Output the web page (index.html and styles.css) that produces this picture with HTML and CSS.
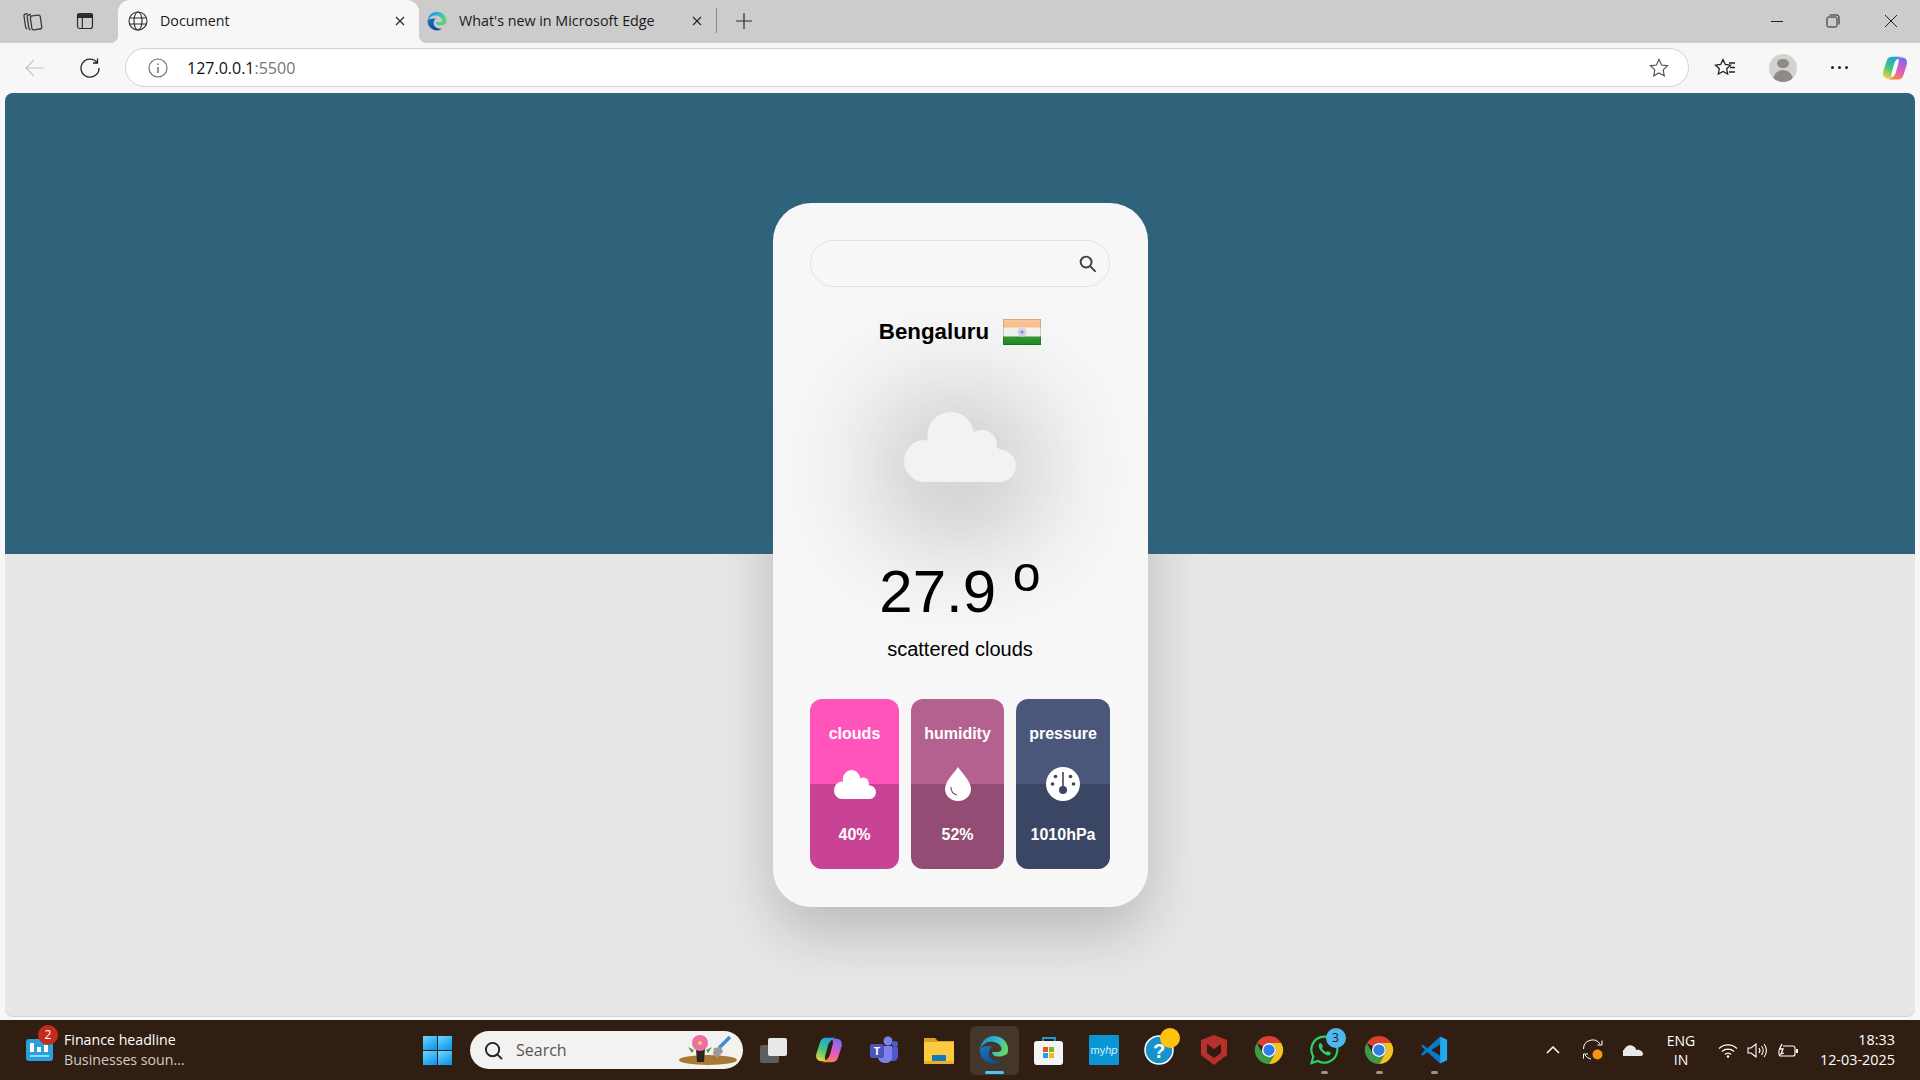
FILE: index.html
```html
<!DOCTYPE html>
<html lang="en">
<head>
    <meta charset="UTF-8">
    <meta name="viewport" content="width=device-width, initial-scale=1.0">
    <title>Document</title>
    <link rel="stylesheet" href="styles.css">
</head>
<body>
<svg class="defs" width="0" height="0">
    <defs>
        <linearGradient id="edgeTop" x1="0" y1="0" x2="1" y2="0.4">
            <stop offset="0" stop-color="#1b7fd0"/>
            <stop offset="0.55" stop-color="#2fb5dc"/>
            <stop offset="1" stop-color="#5fd66c"/>
        </linearGradient>
        <linearGradient id="edgeLow" x1="0" y1="0" x2="0.6" y2="1">
            <stop offset="0" stop-color="#1a78c8"/>
            <stop offset="1" stop-color="#0f4c8f"/>
        </linearGradient>
        <linearGradient id="copLeft" x1="0.7" y1="0" x2="0.2" y2="1">
            <stop offset="0" stop-color="#1f9fe8"/>
            <stop offset="0.55" stop-color="#3fc77e"/>
            <stop offset="1" stop-color="#f2d23c"/>
        </linearGradient>
        <linearGradient id="copRight" x1="0.7" y1="0" x2="0.3" y2="1">
            <stop offset="0" stop-color="#7b6cf0"/>
            <stop offset="0.55" stop-color="#e25bc0"/>
            <stop offset="1" stop-color="#f98a3c"/>
        </linearGradient>
        <linearGradient id="winTile" x1="0" y1="0" x2="0.6" y2="1">
            <stop offset="0" stop-color="#6fd8f8"/>
            <stop offset="1" stop-color="#129bf2"/>
        </linearGradient>
        <linearGradient id="flagSheen" x1="0" y1="0" x2="0" y2="1">
            <stop offset="0" stop-color="#fff" stop-opacity="0.35"/>
            <stop offset="1" stop-color="#fff" stop-opacity="0"/>
        </linearGradient>
        <symbol id="cloud" viewBox="0 0 112 70" preserveAspectRatio="none">
            <circle cx="46.7" cy="23.3" r="23.3"/>
            <circle cx="78" cy="33" r="15"/>
            <circle cx="21" cy="49" r="21"/>
            <circle cx="95.5" cy="53.7" r="16.3"/>
            <rect x="21" y="36" width="74" height="34"/>
        </symbol>
        <symbol id="edge" viewBox="0 0 32 32">
            <path fill="url(#edgeTop)" d="M16 1C8 1 2 7 1 15c3-5 7-8 12-8 6 0 11 4 11 8 0 2-2 3-4 3h-6c0 3 3 5 7 5 3 0 7-1 9-3 1-2 1-3 1-5C31 7 24 1 16 1z"/>
            <path fill="url(#edgeLow)" d="M1 15c-1 9 7 16 15 16 3 0 6-1 8-3-5 1-11-1-13-6-1-4 0-7 3-10-6 0-11 0-13 3z"/>
        </symbol>
        <symbol id="chrome" viewBox="0 0 32 32">
            <path fill="#d9402f" d="M3 8.5A15 15 0 0 1 29 8.5H16A7.5 7.5 0 0 0 9.5 12.25Z"/>
            <path fill="#f3c221" d="M29 8.5A15 15 0 0 1 16 31L22.5 19.75A7.5 7.5 0 0 0 16 8.5Z"/>
            <path fill="#3c9b47" d="M16 31A15 15 0 0 1 3 8.5L9.5 19.75A7.5 7.5 0 0 0 22.5 19.75Z"/>
            <circle cx="16" cy="16" r="7.5" fill="#fff"/>
            <circle cx="16" cy="16" r="6" fill="#2f7ee6"/>
        </symbol>
        <symbol id="copilot" viewBox="0 0 32 32">
            <path fill="url(#copLeft)" d="M13 3C9 3 7 5 6 9L2.5 20C1.500 25 4 28 8 28h6c-2-1-3-3-2-6l3-11c1-3 4-7 9-8z"/>
            <path fill="url(#copRight)" d="M19 29c4 0 6-2 7-6l3.500-11C30.500 7 28 4 24 4h-6c2 1 3 3 2 6l-3 11c-1 3-4 7-9 8z"/>
        </symbol>
    </defs>
</svg>

<div class="tabstrip">
    <svg class="strip-icon workspaces" viewBox="0 0 24 24" fill="none" stroke="#3a3a3a" stroke-width="1.3"><rect x="11" y="6.5" width="10" height="14" rx="2" transform="rotate(-8 16 13)"/><path d="M11 5.500 8.600 6C7.600 6.200 7 7 7.200 8l1.600 11c.2 1 .7 1.600 1.700 2"/><path d="M7.500 4.500 5.500 5C4.500 5.200 3.800 6 4 7l1.600 11c.2 1 .7 1.600 1.400 2"/></svg>
    <svg class="strip-icon tabs-icon" viewBox="0 0 20 20" fill="none" stroke="#2b2b2b" stroke-width="1.3"><rect x="1.7" y="1.7" width="16.6" height="16.6" rx="2.5"/><path d="M2 2.5h16v3.500H2z" fill="#2b2b2b"/><path d="M7 6v12"/></svg>
    <div class="tab active">
        <svg class="tab-icon" viewBox="0 0 20 20" fill="none" stroke="#2b2b2b" stroke-width="1.1"><circle cx="10" cy="10" r="9"/><ellipse cx="10" cy="10" rx="4" ry="9"/><path d="M1.500 7h17M1.500 13h17"/></svg>
        <span class="tab-title">Document</span>
        <svg class="tab-close" viewBox="0 0 10 10" stroke="#222" stroke-width="1.1"><path d="M1 1l8 8M9 1l-8 8"/></svg>
    </div>
    <div class="tab">
        <svg class="tab-icon"><use href="#edge"/></svg>
        <span class="tab-title">What's new in Microsoft Edge</span>
        <svg class="tab-close" viewBox="0 0 10 10" stroke="#222" stroke-width="1.1"><path d="M1 1l8 8M9 1l-8 8"/></svg>
    </div>
    <span class="tab-sep"></span>
    <svg class="new-tab" viewBox="0 0 18 18" stroke="#2b2b2b" stroke-width="1.2"><path d="M9 1v16M1 9h16"/></svg>
    <div class="window-buttons">
        <svg viewBox="0 0 14 14" stroke="#222" stroke-width="1"><path d="M1 7.500h12"/></svg>
        <svg viewBox="0 0 14 14" fill="none" stroke="#222" stroke-width="1"><rect x="1" y="3" width="10" height="10" rx="1.5"/><path d="M3.500 1h7.500A2 2 0 0 1 13 3v7.500"/></svg>
        <svg viewBox="0 0 14 14" stroke="#222" stroke-width="1"><path d="M1 1l12 12M13 1 1 13"/></svg>
    </div>
</div>

<div class="toolbar">
    <svg class="back" viewBox="0 0 20 20" fill="none" stroke="#c4c4c4" stroke-width="1.2"><path d="M1 10h18M9 2l-8 8 8 8"/></svg>
    <svg class="reload" viewBox="0 0 20 20" fill="none" stroke="#222" stroke-width="1.3"><path d="M17 4.500A9 9 0 1 0 19 10"/><path d="M17.500 0.500V5h-4.500"/></svg>
    <div class="address">
        <svg class="info" viewBox="0 0 20 20" fill="none" stroke="#666" stroke-width="1.1"><circle cx="10" cy="10" r="9"/><path d="M10 9v6M10 5.500v1.500" stroke-width="1.4"/></svg>
        <span class="url">127.0.0.1<span class="url-port">:5500</span></span>
        <svg class="star" viewBox="0 0 20 20" fill="none" stroke="#555" stroke-width="1.2"><path d="M10 1.500l2.600 5.500 6 .8-4.400 4.100 1.100 6L10 15l-5.300 2.900 1.100-6L1.400 7.800l6-.8z"/></svg>
    </div>
    <svg class="tool-fav" viewBox="0 0 22 20" fill="none" stroke="#222" stroke-width="1.3"><path d="M9 1.500l2.300 5 5.200.7-3.800 3.600 1 5.200L9 13.500 4.300 16l1-5.200L1.500 7.200l5.200-.7z"/><path d="M15 5h6M16 9.500h5M15 14h6"/></svg>
    <div class="avatar">
        <span class="avatar-head"></span>
        <span class="avatar-body"></span>
    </div>
    <div class="dots"><span></span><span></span><span></span></div>
    <svg class="tool-copilot"><use href="#copilot"/></svg>
</div>

<main class="page">
    <div class="sky"></div>
    <div class="card-shadow"></div>
    <section class="card">
        <div class="search">
            <svg class="search-icon" viewBox="0 0 18 18" fill="none" stroke="#3c3c3c" stroke-width="2"><circle cx="7.500" cy="7.500" r="5.800"/><path d="M12 12l5 5" stroke-linecap="round"/></svg>
        </div>
        <div class="city">
            <span>Bengaluru</span>
            <svg class="flag" viewBox="0 0 38 26">
                <rect width="38" height="26" fill="#f0f0ee"/>
                <rect width="38" height="8.5" fill="#f9ab66"/>
                <rect y="17.5" width="38" height="8.5" fill="#1f8a1e"/>
                <circle cx="19" cy="13" r="4.5" fill="#c8c8e6"/>
                <circle cx="19" cy="13" r="1.5" fill="#6a6ac0"/>
                <rect width="38" height="26" fill="url(#flagSheen)"/>
                <rect x="0.5" y="0.5" width="37" height="25" fill="none" stroke="#000" stroke-opacity="0.15"/>
            </svg>
        </div>
        <svg class="weather-icon"><use href="#cloud"/></svg>
        <div class="temp">27.9 <sup>o</sup></div>
        <div class="desc">scattered clouds</div>
        <div class="stats">
            <div class="stat stat-clouds">
                <span>clouds</span>
                <svg class="stat-cloud"><use href="#cloud"/></svg>
                <span>40%</span>
            </div>
            <div class="stat stat-humidity">
                <span>humidity</span>
                <svg class="stat-drop" viewBox="0 0 26 34"><path fill="#fff" d="M13 0C16 5 26 14 26 22A13 12 0 0 1 0 22C0 14 10 5 13 0z"/><path fill="none" stroke="#934d75" stroke-width="1.2" d="M6 20c0 4 2 7 6 8"/></svg>
                <span>52%</span>
            </div>
            <div class="stat stat-pressure">
                <span>pressure</span>
                <svg class="stat-gauge" viewBox="0 0 34 34"><circle cx="17" cy="17" r="17" fill="#fff"/><g fill="#3b4664"><circle cx="17" cy="23" r="4"/><rect x="16.2" y="5" width="1.6" height="18"/><circle cx="9.500" cy="9.500" r="1.8"/><circle cx="24.500" cy="9.500" r="1.8"/><circle cx="6.500" cy="17" r="1.8"/><circle cx="27.500" cy="17" r="1.8"/></g></svg>
                <span>1010hPa</span>
            </div>
        </div>
    </section>
</main>

<footer class="taskbar">
    <div class="news">
        <div class="news-icon">
            <svg viewBox="0 0 27 22"><rect width="27" height="22" rx="3" fill="#2a9fdc"/><rect x="4" y="4" width="4" height="9" fill="#fff"/><rect x="11" y="8" width="4" height="5" fill="#fff"/><rect x="18" y="6" width="4" height="7" fill="#fff"/><rect x="4" y="16" width="19" height="2" fill="#7fe0ff"/></svg>
            <span class="news-badge">2</span>
        </div>
        <div class="news-text">
            <span class="news-title">Finance headline</span>
            <span class="news-sub">Businesses soun...</span>
        </div>
    </div>
    <div class="start">
        <svg viewBox="0 0 29 29"><rect width="14" height="14" fill="url(#winTile)"/><rect x="15" width="14" height="14" fill="url(#winTile)"/><rect y="15" width="14" height="14" fill="url(#winTile)"/><rect x="15" y="15" width="14" height="14" fill="url(#winTile)"/></svg>
    </div>
    <div class="task-search">
        <svg class="task-search-icon" viewBox="0 0 20 20" fill="none" stroke="#222" stroke-width="2"><circle cx="9" cy="9" r="7"/><path d="M14 14l5 5"/></svg>
        <span>Search</span>
        <svg class="task-search-art" viewBox="0 0 60 30">
            <ellipse cx="30" cy="25" rx="29" ry="5" fill="#a67a35"/>
            <path d="M18 14h9l-1 13h-7z" fill="#2a2320"/>
            <circle cx="22" cy="8" r="8" fill="#ea6fa5"/>
            <circle cx="22" cy="8" r="2" fill="#f5d24a"/>
            <path d="M10 12l6 3-2 3zM34 12l-6 3 2 3z" fill="#4f9a3d"/>
            <path d="M52 2 41 13" stroke="#3a8fd8" stroke-width="3.5"/>
            <path d="M36 13l7-1 2 5-6 6-4-4z" fill="#9a9a9a"/>
        </svg>
    </div>
    <div class="apps">
        <div class="app">
            <svg viewBox="0 0 30 30"><rect x="1" y="10" width="19" height="18" rx="2" fill="#5d5d5d"/><rect x="9" y="3" width="19" height="18" rx="2" fill="#e8e8e8"/></svg>
        </div>
        <div class="app"><svg><use href="#copilot"/></svg></div>
        <div class="app">
            <svg viewBox="0 0 30 30"><circle cx="19" cy="6" r="4.5" fill="#7b83eb"/><circle cx="26" cy="9" r="3" fill="#5059c9"/><path d="M21 12h8v9c0 3-2 5-5 5h-3z" fill="#5059c9"/><path d="M9 11h14v11c0 4-3 6-7 6s-7-3-7-6z" fill="#7b83eb"/><rect x="1" y="9" width="14" height="14" rx="2" fill="#4b53bc"/><text class="teams-t" x="8" y="20" text-anchor="middle">T</text></svg>
        </div>
        <div class="app">
            <svg viewBox="0 0 30 30"><path d="M0 3h11l3 3h16v8H0z" fill="#d9a11f"/><rect y="7" width="30" height="22" rx="1" fill="#fcc940"/><rect x="8" y="20" width="14" height="6" rx="1" fill="#1079c4"/><rect y="26" width="30" height="3" fill="#e9b226"/></svg>
        </div>
        <div class="app app-active">
            <svg><use href="#edge"/></svg>
            <span class="app-bar"></span>
        </div>
        <div class="app">
            <svg viewBox="0 0 30 30"><path d="M9 7V3h12v4" fill="none" stroke="#1f9ddb" stroke-width="1.8"/><rect y="6" width="29" height="24" rx="3" fill="#f4f4f4"/><rect x="9" y="12" width="5" height="5" fill="#e8522a"/><rect x="15" y="12" width="5" height="5" fill="#7db82a"/><rect x="9" y="18" width="5" height="5" fill="#1ba0e2"/><rect x="15" y="18" width="5" height="5" fill="#f6b80f"/></svg>
        </div>
        <div class="app">
            <div class="myhp">my<i>hp</i></div>
        </div>
        <div class="app">
            <svg class="help" viewBox="0 0 30 30"><circle cx="15" cy="15" r="14" fill="#1793c9" stroke="#fff" stroke-width="1.5"/><text class="help-q" x="15" y="23" text-anchor="middle">?</text><circle cx="26" cy="3" r="10" fill="#ffc20e"/></svg>
        </div>
        <div class="app">
            <svg viewBox="0 0 30 30"><path d="M2 5l13-5 13 5v15L15 30 2 20z" fill="#b7302b"/><path d="M8 9l7 5 7-5v9l-7 5-7-5z" fill="#2f1c12"/></svg>
        </div>
        <div class="app"><svg><use href="#chrome"/></svg></div>
        <div class="app">
            <svg viewBox="0 0 30 30"><path d="M2.500 28l1.800-6.500A13 13 0 1 1 9 26z" fill="none" stroke="#25d366" stroke-width="2.2"/><path d="M10 9c-1 2 0 5 3 8s6 4 8 3l1-2-3-2-2 1c-1 0-4-3-4-4l1-2-2-3z" fill="#25d366"/></svg>
            <span class="app-count">3</span>
            <span class="app-dot"></span>
        </div>
        <div class="app">
            <svg><use href="#chrome"/></svg>
            <span class="app-dot"></span>
        </div>
        <div class="app">
            <svg viewBox="0 0 32 32"><path fill="#0a7acb" d="M22.500 1.500 9 14 4 10l-2 1.500L6.500 16 2 20.500 4 22l5-4 13.500 12.500V22L13 16l9.500-6z"/><path fill="#23a9f2" d="M22.500 1.500 30 5v22l-7.500 3.500z"/></svg>
            <span class="app-dot"></span>
        </div>
    </div>
    <div class="tray">
        <div class="tray-item tray-w40">
            <svg class="tray-chevron" viewBox="0 0 14 8" fill="none" stroke="#fff" stroke-width="1.5"><path d="M1 7l6-6 6 6"/></svg>
        </div>
        <div class="tray-item tray-w40">
            <svg class="tray-sync" viewBox="0 0 22 22" fill="none" stroke="#fff" stroke-width="1"><path d="M1.500 10A9 9 0 0 1 18 5M20 1.500V6h-4.500M6 15H1.500v4.500M3 16a9 9 0 0 0 6 4"/><circle cx="15.500" cy="15.500" r="5" fill="#f7930e" stroke="none"/></svg>
        </div>
        <div class="tray-item tray-w40">
            <svg class="tray-onedrive" viewBox="0 0 20 12"><path d="M1 12a3 3 0 0 1 0-6c1-3 5-6 9-4 2 1 3 2 3 4 3-1 7 1 7 4 0 1-1 2-2 2z" fill="#e8e8e8"/></svg>
        </div>
        <div class="tray-lang"><span>ENG</span><span>IN</span></div>
        <svg class="tray-wifi" viewBox="0 0 20 15" fill="none" stroke="#fff" stroke-width="1.2"><path d="M1 5.500a13 13 0 0 1 18 0M4 8.500a9 9 0 0 1 12 0M7 11.500a4 4 0 0 1 6 0"/><circle cx="10" cy="13.500" r="1.2" fill="#fff" stroke="none"/></svg>
        <svg class="tray-speaker" viewBox="0 0 20 15" fill="none" stroke="#fff" stroke-width="1.1"><path d="M1 5h3l5-4v13l-5-4H1z"/><path d="M12 5a4 4 0 0 1 0 5M14.500 3a7 7 0 0 1 0 9M17 1a10 10 0 0 1 0 13"/></svg>
        <svg class="tray-battery" viewBox="0 0 20 15" fill="none" stroke="#fff" stroke-width="1.1"><path d="M5 3h10a2 2 0 0 1 2 2v6a2 2 0 0 1-2 2H3a2 2 0 0 1-2-2V7"/><path d="M18 6.500h1.500v3H18" fill="#fff"/><path d="M4 1 1.500 6H5l-2 5 3-1" stroke-width="1.3"/></svg>
        <div class="clock"><span>18:33</span><span>12-03-2025</span></div>
    </div>
</footer>
</body>
</html>
```

FILE: styles.css
```css
* {
    box-sizing: border-box;
}
html, body {
    height: 100%;
}
body {
    display: flex;
    flex-direction: column;
    height: 1080px;
    margin: 0;
    overflow: hidden;
    background: #f7f7f7;
    font-family: "Open Sans", "Noto Sans", sans-serif;
    color: #1a1a1a;
}
svg {
    display: block;
    flex: none;
}
.defs {
    position: absolute;
}

/* browser tabs */
.tabstrip {
    display: flex;
    align-items: center;
    flex: none;
    height: 43px;
    background: #cccccc;
}
.strip-icon {
    width: 20px;
    height: 20px;
    margin-bottom: 2px;
}
.workspaces {
    width: 24px;
    height: 24px;
    margin-left: 20px;
}
.tabs-icon {
    width: 18px;
    height: 18px;
    margin-left: 32px;
}
.tab {
    position: relative;
    display: flex;
    align-items: center;
    height: 43px;
    width: 297px;
    padding-left: 8px;
    padding-bottom: 2px;
    font-size: 14.3px;
}
.tab.active {
    width: 301px;
    margin-left: 24px;
    padding-left: 10px;
    border-radius: 12px 12px 0 0;
    background: #f7f7f7;
}
.tab.active::before,
.tab.active::after {
    content: "";
    position: absolute;
    bottom: 0;
    width: 8px;
    height: 8px;
}
.tab.active::before {
    left: -8px;
    background: radial-gradient(circle at 0 0, transparent 8px, #f7f7f7 8.5px);
}
.tab.active::after {
    right: -8px;
    background: radial-gradient(circle at 100% 0, transparent 8px, #f7f7f7 8.5px);
}
.tab-icon {
    width: 20px;
    height: 20px;
}
.tab-title {
    margin-left: 12px;
}
.tab-close {
    width: 10px;
    height: 10px;
    margin-left: auto;
    margin-right: 14px;
}
.tab-sep {
    width: 1px;
    height: 25px;
    margin-bottom: 2px;
    background: #8a8a8a;
}
.new-tab {
    width: 18px;
    height: 18px;
    margin-left: 18px;
    margin-bottom: 2px;
}
.window-buttons {
    display: flex;
    gap: 44px;
    margin-left: auto;
    margin-right: 22px;
    margin-bottom: 2px;
}
.window-buttons svg {
    width: 14px;
    height: 14px;
}
.window-buttons svg:first-child {
    margin-right: -2px;
}

/* address bar row */
.toolbar {
    display: flex;
    align-items: center;
    flex: none;
    height: 50px;
    padding-bottom: 1px;
    background: #f7f7f7;
}
.back {
    width: 20px;
    height: 20px;
    margin-left: 25px;
}
.reload {
    width: 20px;
    height: 20px;
    margin-left: 35px;
}
.address {
    display: flex;
    align-items: center;
    width: 1564px;
    height: 39px;
    margin-left: 25px;
    padding-left: 22px;
    border: 1px solid #d2d2d2;
    border-radius: 20px;
    background: #fff;
}
.info {
    width: 20px;
    height: 20px;
}
.url {
    margin-left: 19px;
    font-size: 16px;
    color: #111;
}
.url-port {
    color: #767676;
}
.star {
    width: 20px;
    height: 20px;
    margin-left: auto;
    margin-right: 19px;
}
.tool-fav {
    width: 22px;
    height: 20px;
    margin-left: 25px;
}
.avatar {
    display: flex;
    flex-direction: column;
    align-items: center;
    width: 28px;
    height: 28px;
    margin-left: 33px;
    border-radius: 50%;
    overflow: hidden;
    background: #d3d2ce;
}
.avatar-head {
    width: 12px;
    height: 12px;
    margin-top: 5px;
    border-radius: 50%;
    background: #8d8a87;
}
.avatar-body {
    width: 20px;
    height: 14px;
    margin-top: 2px;
    border-radius: 10px 10px 0 0;
    background: #8d8a87;
}
.dots {
    display: flex;
    gap: 4px;
    margin-left: 34px;
}
.dots span {
    width: 3px;
    height: 3px;
    border-radius: 50%;
    background: #222;
}
.tool-copilot {
    width: 28px;
    height: 28px;
    margin-left: 33px;
}

/* the weather page */
.page {
    display: grid;
    flex: none;
    width: 1910px;
    height: 923px;
    margin-left: 5px;
    border-radius: 8px;
    overflow: hidden;
    background: #e7e7e7;
    box-shadow: 0 1px 0 #d4d4d4;
    font-family: "Liberation Sans", Arial, sans-serif;
}
.sky {
    grid-area: 1 / 1;
    z-index: 1;
    height: 461px;
    background: #2e637b;
}
.card-shadow {
    grid-area: 1 / 1;
    place-self: center;
    width: 375px;
    height: 704px;
    border-radius: 38px;
    box-shadow: 0 25px 60px rgba(0, 0, 0, 0.2);
}
.card {
    grid-area: 1 / 1;
    place-self: center;
    z-index: 2;
    display: flex;
    flex-direction: column;
    align-items: center;
    width: 375px;
    height: 704px;
    padding: 37px 37.5px 0;
    border-radius: 38px;
    background: #f7f7f7;
    color: #000;
}
.search {
    display: flex;
    align-items: center;
    justify-content: flex-end;
    width: 300px;
    height: 47px;
    padding-right: 13px;
    border: 1px solid #e0e0e0;
    border-radius: 24px;
}
.search-icon {
    width: 17px;
    height: 17px;
}
.city {
    display: flex;
    align-items: center;
    gap: 14px;
    height: 26px;
    margin-top: 32px;
    font-size: 22.3px;
    font-weight: bold;
}
.flag {
    width: 38px;
    height: 26px;
}
.weather-icon {
    width: 112px;
    height: 70px;
    margin-top: 67px;
    fill: #f2f2f2;
    filter: drop-shadow(0 14px 65px rgba(0, 0, 0, 0.75));
}
.temp {
    margin-top: 80px;
    font-size: 60px;
    line-height: 60px;
}
.temp sup {
    line-height: 0;
}
.desc {
    margin-top: 16px;
    font-size: 20px;
    line-height: 23px;
}
.stats {
    display: grid;
    grid-template-columns: 89px 93px 94px;
    gap: 12px;
    width: 300px;
    height: 170px;
    margin-top: 38px;
}
.stat {
    display: flex;
    flex-direction: column;
    align-items: center;
    justify-content: space-between;
    padding: 26px 0 25px;
    border-radius: 12px;
    font-size: 16px;
    font-weight: bold;
    line-height: 18px;
    color: #fff;
}
.stat-clouds {
    background: linear-gradient(#ff55bb 50%, #c84296 50%);
}
.stat-humidity {
    background: linear-gradient(#b5618f 50%, #934d75 50%);
}
.stat-pressure {
    background: linear-gradient(#4a577b 50%, #3b4664 50%);
}
.stat-cloud {
    width: 42px;
    height: 29px;
    fill: #fff;
}
.stat-drop {
    width: 26px;
    height: 34px;
}
.stat-gauge {
    width: 34px;
    height: 34px;
}

/* windows taskbar */
.taskbar {
    display: flex;
    align-items: center;
    flex: none;
    width: 1920px;
    height: 60px;
    margin-top: 4px;
    background: #301e12;
    color: #fff;
    font-family: "Open Sans", "Noto Sans", sans-serif;
}
.news {
    display: flex;
    align-items: center;
    flex: none;
    width: 410px;
    padding-left: 26px;
}
.news-icon {
    position: relative;
    width: 27px;
}
.news-icon svg {
    width: 27px;
    height: 22px;
}
.news-badge {
    position: absolute;
    top: -14px;
    left: 12px;
    width: 20px;
    height: 20px;
    border-radius: 50%;
    background: #c42b1c;
    font-size: 12px;
    line-height: 20px;
    text-align: center;
}
.news-text {
    display: flex;
    flex-direction: column;
    margin-left: 11px;
    font-size: 14.2px;
    line-height: 20px;
}
.news-sub {
    color: #d0cbc6;
}
.start {
    display: flex;
    justify-content: center;
    flex: none;
    width: 55px;
}
.start svg {
    width: 29px;
    height: 29px;
}
.task-search {
    display: flex;
    align-items: center;
    flex: none;
    width: 273px;
    height: 38px;
    margin: 0 3.5px 0 5px;
    padding: 0 5px 0 14px;
    border-radius: 19px;
    background: #f3f2f0;
    color: #555;
    font-size: 16px;
}
.task-search-icon {
    width: 19px;
    height: 19px;
    margin-right: 13px;
}
.task-search-art {
    width: 60px;
    height: 30px;
    margin-left: auto;
}
.apps {
    display: flex;
    flex: none;
}
.app {
    position: relative;
    display: flex;
    align-items: center;
    justify-content: center;
    width: 55px;
    height: 60px;
}
.app svg {
    width: 30px;
    height: 30px;
}
.app svg.help {
    overflow: visible;
}
.app-active::before {
    content: "";
    position: absolute;
    top: 6px;
    left: 3px;
    width: 49px;
    height: 49px;
    border-radius: 6px;
    background: #45362b;
}
.app-active svg {
    position: relative;
}
.app-bar {
    position: absolute;
    bottom: 6px;
    left: 18px;
    width: 19px;
    height: 3px;
    border-radius: 2px;
    background: #4fc3f7;
}
.app-dot {
    position: absolute;
    bottom: 6px;
    left: 24px;
    width: 7px;
    height: 3px;
    border-radius: 2px;
    background: #9a928b;
}
.app-count {
    position: absolute;
    top: 8px;
    left: 29px;
    width: 20px;
    height: 20px;
    border-radius: 50%;
    background: #4db8f0;
    color: #14202a;
    font-size: 12px;
    line-height: 20px;
    text-align: center;
}
.teams-t {
    fill: #fff;
    font-family: "Open Sans", sans-serif;
    font-size: 11px;
    font-weight: bold;
}
.help-q {
    fill: #fff;
    font-family: "Liberation Sans", sans-serif;
    font-size: 20px;
    font-weight: bold;
}
.myhp {
    width: 30px;
    height: 30px;
    border-radius: 1px;
    background: #0a95d5;
    color: #d8f1fb;
    font-family: "Liberation Sans", sans-serif;
    font-size: 11px;
    line-height: 30px;
    text-align: center;
}
.tray {
    display: flex;
    align-items: center;
    flex: 1;
    padding-left: 71.5px;
    padding-right: 25px;
}
.tray-item {
    display: flex;
    justify-content: center;
    flex: none;
}
.tray-w40 {
    width: 40px;
}
.tray-chevron {
    width: 14px;
    height: 8px;
}
.tray-sync {
    width: 22px;
    height: 22px;
}
.tray-onedrive {
    width: 20px;
    height: 12px;
}
.tray-lang {
    display: flex;
    flex-direction: column;
    align-items: center;
    flex: none;
    width: 56px;
    font-size: 14px;
    line-height: 19px;
}
.tray-wifi {
    width: 20px;
    height: 15px;
    margin-left: 9px;
}
.tray-speaker {
    width: 20px;
    height: 15px;
    margin-left: 9px;
}
.tray-battery {
    width: 20px;
    height: 15px;
    margin-left: 11px;
}
.clock {
    display: flex;
    flex-direction: column;
    align-items: flex-end;
    margin-left: auto;
    font-size: 14.4px;
    line-height: 20px;
}
```
